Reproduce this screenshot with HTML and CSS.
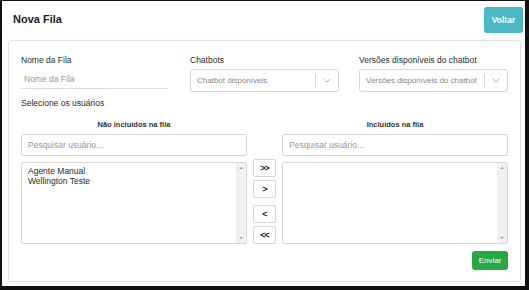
FILE: index.html
```html
<!DOCTYPE html>
<html lang="pt-BR">
<head>
  <meta charset="UTF-8">
  <meta name="viewport" content="width=device-width, initial-scale=1.0">
  <title>Nova Fila</title>
  <link rel="stylesheet" href="styles.css">
</head>
<body>

  <div class="frame">

    <!-- cabeçalho -->
    <div class="header">
      <h2>Nova Fila</h2>
      <button class="btn-voltar">Voltar</button>
    </div>

    <!-- formulário -->
    <div class="card">
      <div class="fields">
        <div class="field">
          <label>Nome da Fila</label>
          <input class="line-input" type="text" placeholder="Nome da Fila">
        </div>
        <div class="field">
          <label>Chatbots</label>
          <div class="fake-select">
            <span class="placeholder">Chatbot disponíveis</span>
            <span class="sep"></span>
            <svg class="chevron" width="8" height="5" viewBox="0 0 8 5"><path d="M1 1 L4 4 L7 1" fill="none" stroke="#b3b3b3" stroke-width="1"/></svg>
          </div>
        </div>
        <div class="field">
          <label>Versões disponíveis do chatbot</label>
          <div class="fake-select">
            <span class="placeholder">Versões disponíveis do chatbot</span>
            <span class="sep"></span>
            <svg class="chevron" width="8" height="5" viewBox="0 0 8 5"><path d="M1 1 L4 4 L7 1" fill="none" stroke="#b3b3b3" stroke-width="1"/></svg>
          </div>
        </div>
      </div>

      <p class="section-title">Selecione os usuários</p>

      <div class="transfer">
        <div class="list-col">
          <h4>Não incluídos na fila</h4>
          <input class="search" type="text" placeholder="Pesquisar usuário...">
          <div class="list-box">
            <ul>
              <li>Agente Manual</li>
              <li>Wellington Teste</li>
            </ul>
            <div class="scroll">
              <span class="arrow-up"></span>
              <span class="arrow-down"></span>
            </div>
          </div>
        </div>

        <div class="move-btns">
          <button class="move">&gt;&gt;</button>
          <button class="move">&gt;</button>
          <button class="move group">&lt;</button>
          <button class="move">&lt;&lt;</button>
        </div>

        <div class="list-col">
          <h4>Incluídos na fila</h4>
          <input class="search" type="text" placeholder="Pesquisar usuário...">
          <div class="list-box">
            <ul></ul>
            <div class="scroll">
              <span class="arrow-up"></span>
              <span class="arrow-down"></span>
            </div>
          </div>
        </div>
      </div>

      <div class="actions">
        <button class="btn-enviar">Enviar</button>
      </div>
    </div>

  </div>

</body>
</html>
```

FILE: styles.css
```css
body {
  margin: 0;
  padding: 0;
  background-color: #fff;
  font-family: "Liberation Sans", Arial, sans-serif;
  color: #333;
}

/* moldura preta */
.frame {
  width: 529px;
  height: 290px;
  box-sizing: border-box;
  border-style: solid;
  border-color: #111;
  border-width: 1px 4px 4px 2px;
  display: flex;
  flex-direction: column;
}

.header {
  display: flex;
  justify-content: space-between;
  align-items: flex-start;
  padding: 6px 2px 0 11px;
  height: 33px;
}

.header h2 {
  margin: 0;
  font-size: 11px;
  font-weight: bold;
  color: #222;
  line-height: 24px;
}

.btn-voltar {
  width: 39px;
  height: 26px;
  border: none;
  border-radius: 3px;
  background-color: #4bb9c3;
  color: #fff;
  font-family: inherit;
  font-size: 8.5px;
  font-weight: bold;
  padding: 0;
}

/* card principal */
.card {
  margin: 6px 4px 4px 6px;
  flex: 1;
  border: 1px solid #e3e3e3;
  border-radius: 3px;
  box-shadow: 0 0 2px rgba(0, 0, 0, 0.08);
  padding: 13px 12px 11px 12px;
}

.fields {
  display: grid;
  grid-template-columns: repeat(3, 1fr);
  column-gap: 20px;
}

.field label {
  display: block;
  font-size: 8.5px;
  line-height: 12px;
  color: #2b2b2b;
  margin-bottom: 3px;
}

.line-input {
  display: block;
  width: 147px;
  height: 20px;
  box-sizing: border-box;
  border: none;
  border-bottom: 1px solid #ddd;
  padding: 0 0 0 3px;
  font-family: inherit;
  font-size: 8.5px;
  outline: none;
}

.line-input::placeholder,
.search::placeholder {
  color: #999;
}

.fake-select {
  height: 23px;
  box-sizing: border-box;
  border: 1px solid #d6d6d6;
  border-radius: 3px;
  display: flex;
  align-items: center;
  padding-left: 6px;
}

.fake-select .placeholder {
  flex: 1;
  font-size: 8px;
  color: #888;
  white-space: nowrap;
}

.fake-select .sep {
  width: 1px;
  height: 13px;
  background-color: #d6d6d6;
  margin-right: 7px;
}

.fake-select .chevron {
  margin-right: 7px;
}

.section-title {
  margin: 5px 0 0 0;
  font-size: 8.5px;
  line-height: 12px;
  color: #2b2b2b;
}

/* listas de transferência */
.transfer {
  display: grid;
  grid-template-columns: 1fr 23px 1fr;
  column-gap: 6px;
  margin-top: 10px;
}

.list-col h4 {
  margin: 0;
  text-align: center;
  font-size: 7.5px;
  line-height: 12px;
  font-weight: bold;
  color: #333;
}

.search {
  display: block;
  width: 100%;
  height: 22px;
  box-sizing: border-box;
  margin-top: 3px;
  border: 1px solid #d6d6d6;
  border-radius: 2px;
  padding: 0 6px;
  font-family: inherit;
  font-size: 8.5px;
  outline: none;
}

.list-box {
  display: flex;
  height: 82px;
  box-sizing: border-box;
  margin-top: 6px;
  border: 1px solid #d6d6d6;
  border-radius: 2px;
}

.list-box ul {
  flex: 1;
  list-style: none;
  margin: 0;
  padding: 3px 6px;
}

.list-box li {
  font-size: 8.5px;
  line-height: 10px;
  color: #2b2b2b;
}

.scroll {
  width: 10px;
  background-color: #f1f1f1;
  display: flex;
  flex-direction: column;
  justify-content: space-between;
  align-items: center;
  padding: 4px 0;
}

.arrow-up,
.arrow-down {
  width: 0;
  height: 0;
  border-left: 2px solid transparent;
  border-right: 2px solid transparent;
}

.arrow-up {
  border-bottom: 2px solid #a3a3a3;
}

.arrow-down {
  border-top: 2px solid #a3a3a3;
}

.move-btns {
  align-self: end;
  display: flex;
  flex-direction: column;
  gap: 3px;
}

.move {
  width: 23px;
  height: 18px;
  box-sizing: border-box;
  border: 1px solid #d6d6d6;
  border-radius: 2px;
  background-color: #fff;
  color: #222;
  font-family: "Liberation Sans", Arial, sans-serif;
  font-size: 9px;
  font-weight: bold;
  padding: 0;
  letter-spacing: -1px;
}

.move.group {
  margin-top: 4px;
}

.actions {
  display: flex;
  justify-content: flex-end;
  margin-top: 7px;
}

.btn-enviar {
  width: 36px;
  height: 19px;
  border: none;
  border-radius: 3px;
  background-color: #28a745;
  color: #fff;
  font-family: inherit;
  font-size: 8px;
  padding: 0;
}
```
